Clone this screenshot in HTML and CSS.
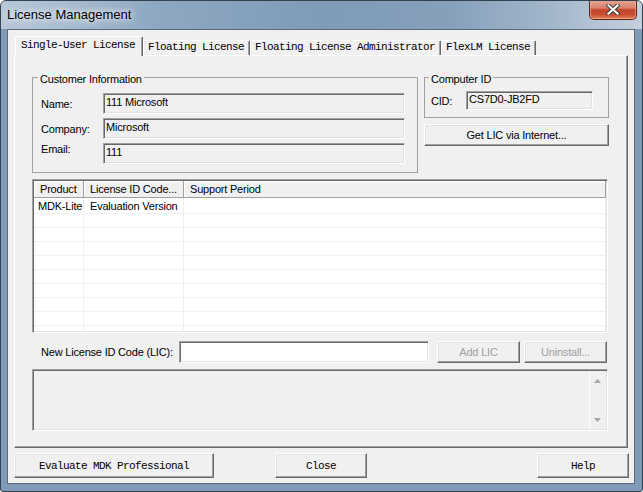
FILE: index.html
```html
<!DOCTYPE html>
<html>
<head>
<meta charset="utf-8">
<title>License Management</title>
<link rel="stylesheet" href="styles.css">
</head>
<body>
<div class="window">
  <div class="titlebar">
    <span class="title">License Management</span>
    <div class="close-btn">
      <svg width="14" height="11" viewBox="0 0 14 11">
        <path d="M2.5 1.5 L11.5 9.5 M11.5 1.5 L2.5 9.5" stroke="#3b3b3b" stroke-width="4.2" stroke-linecap="square" fill="none"/>
        <path d="M2.5 1.5 L11.5 9.5 M11.5 1.5 L2.5 9.5" stroke="#ffffff" stroke-width="2.2" stroke-linecap="square" fill="none"/>
      </svg>
    </div>
  </div>
  <div class="client">
    <div class="tabs">
      <div class="tab active">Single-User License</div>
      <div class="tab">Floating License</div>
      <div class="tab">Floating License Administrator</div>
      <div class="tab">FlexLM License</div>
    </div>
    <div class="page">
      <div class="top-row">
        <fieldset class="group customer">
          <legend>Customer Information</legend>
          <div class="form-grid">
            <label>Name:</label><div class="field">111 Microsoft</div>
            <label>Company:</label><div class="field">Microsoft</div>
            <label class="email-label">Email:</label><div class="field">111</div>
          </div>
        </fieldset>
        <div class="cid-col">
          <fieldset class="group computer">
            <legend>Computer ID</legend>
            <div class="cid-row">
              <label>CID:</label>
              <div class="field cid">CS7D0-JB2FD</div>
            </div>
          </fieldset>
          <div class="btn get-lic">Get LIC via Internet...</div>
        </div>
      </div>

      <div class="listview">
        <table class="grid">
          <colgroup><col class="c1"><col class="c2"><col class="c3"></colgroup>
          <thead>
            <tr><th>Product</th><th>License ID Code...</th><th>Support Period</th></tr>
          </thead>
          <tbody>
            <tr class="first"><td>MDK-Lite</td><td>Evaluation Version</td><td></td></tr>
            <tr><td></td><td></td><td></td></tr>
            <tr><td></td><td></td><td></td></tr>
            <tr><td></td><td></td><td></td></tr>
            <tr><td></td><td></td><td></td></tr>
            <tr><td></td><td></td><td></td></tr>
            <tr><td></td><td></td><td></td></tr>
            <tr><td></td><td></td><td></td></tr>
            <tr><td></td><td></td><td></td></tr>
            <tr><td></td><td></td><td></td></tr>
          </tbody>
        </table>
      </div>

      <div class="lic-row">
        <label>New License ID Code (LIC):</label>
        <div class="input"></div>
        <div class="btn disabled add-lic">Add LIC</div>
        <div class="btn disabled uninstall">Uninstall...</div>
      </div>

      <div class="log">
        <div class="scrollbar">
          <div class="sb-btn"><svg width="7" height="4" viewBox="0 0 7 4"><path d="M3.5 0 L7 4 H0 Z" fill="#a3a3a3"/></svg></div>
          <div class="sb-btn"><svg width="7" height="4" viewBox="0 0 7 4"><path d="M0 0 H7 L3.5 4 Z" fill="#a3a3a3"/></svg></div>
        </div>
      </div>
    </div>
    <div class="footer">
      <div class="btn mono eval">Evaluate MDK Professional</div>
      <div class="btn mono close">Close</div>
      <div class="btn mono help">Help</div>
    </div>
  </div>
</div>
</body>
</html>
```

FILE: styles.css
```css
* { box-sizing: border-box; }
html, body { margin: 0; padding: 0; }
body {
  width: 643px;
  height: 492px;
  overflow: hidden;
  background: #ffffff;
  font-family: "Liberation Sans", Arial, sans-serif;
  font-size: 11px;
  letter-spacing: -0.2px;
  color: #000;
}

/* ---------- window frame ---------- */
.window {
  width: 643px;
  height: 492px;
  border: 1px solid #34414e;
  border-radius: 6px 6px 3px 3px;
  background: #7f9bb8;
  display: flex;
  flex-direction: column;
  overflow: hidden;
}
.titlebar {
  height: 28px;
  flex: none;
  display: flex;
  align-items: flex-start;
  background: linear-gradient(to right, #b7c8d9 0%, #a9bcd0 10%, #8ea8c2 24%, #7f9bb8 50%, #86a0bb 70%, #a3b7cb 86%, #c3d0dd 100%);
}
.title {
  font-size: 13px;
  letter-spacing: 0;
  line-height: 28px;
  padding-left: 6px;
  color: #000;
  text-shadow: 0 0 6px #ffffff, 0 0 10px rgba(255,255,255,0.8);
}
.close-btn {
  margin-left: auto;
  margin-right: 5px;
  margin-top: -1px;
  width: 48px;
  height: 20px;
  border: 1px solid #5e2418;
  border-top: none;
  border-radius: 0 0 5px 5px;
  background: linear-gradient(#e8a795 0%, #d9806a 42%, #c1452a 52%, #c9502f 78%, #e0845e 100%);
  box-shadow: inset 0 0 0 1px rgba(255, 210, 190, 0.45);
  display: flex;
  align-items: center;
  justify-content: center;
}

/* ---------- client area ---------- */
.client {
  flex: none;
  margin-left: 6px;
  width: 628px;
  height: 455px;
  background: #f0f0f0;
  border: 1px solid #5b6b7c;
  padding: 6px 6px 5px 6px;
  display: flex;
  flex-direction: column;
}

/* ---------- tabs ---------- */
.tabs {
  flex: none;
  display: flex;
  align-items: flex-end;
  height: 19px;
  padding-left: 1px;
}
.tab {
  font-family: "Liberation Mono", "Courier New", monospace;
  font-size: 11px;
  letter-spacing: -0.6px;
  height: 15px;
  line-height: 13px;
  padding: 0 5px 0 4px;
  background: #f0f0f0;
  border: 1px solid;
  border-bottom: none;
  border-color: #ffffff #696969 transparent #ffffff;
  box-shadow: inset -1px 0 0 #a0a0a0;
  border-radius: 2px 2px 0 0;
  white-space: nowrap;
}
.tab.active {
  height: 20px;
  margin-bottom: -1px;
  padding: 2px 7px 0 5px;
  position: relative;
  z-index: 1;
}

.page {
  flex: none;
  width: 614px;
  height: 393px;
  background: #f0f0f0;
  border: 1px solid;
  border-color: #ffffff #696969 #696969 #ffffff;
  box-shadow: inset -1px -1px 0 #a0a0a0;
  padding: 13px 19px 0 17px;
  display: flex;
  flex-direction: column;
}

/* ---------- group boxes ---------- */
.top-row {
  display: flex;
  align-items: flex-start;
  flex: none;
}
.group {
  margin: 0;
  min-width: 0;
  border: 1px solid #a0a0a0;
}
.group legend {
  padding: 4px 2px 0 2px;
  line-height: 13px;
  margin-left: -3px;
}
.customer {
  flex: none;
  width: 386px;
  padding: 0 12px 8px 8px;
}
.form-grid {
  display: grid;
  grid-template-columns: 62px 302px;
  grid-auto-rows: 21px;
  row-gap: 4px;
  margin-top: 7px;
  align-items: center;
}
.email-label {
  align-self: start;
}

.field {
  height: 21px;
  background: #f0f0f0;
  border: 1px solid;
  border-color: #a0a0a0 #ffffff #ffffff #a0a0a0;
  box-shadow: inset 1px 1px 0 #696969, inset -1px -1px 0 #e3e3e3;
  padding: 0 2px;
  line-height: 17px;
  white-space: nowrap;
}

.cid-col {
  flex: none;
  width: 185px;
  margin-left: 6px;
  display: flex;
  flex-direction: column;
}
.computer {
  padding: 0 14px 7px 5px;
}
.computer legend { margin-left: -1px; }
.cid-row {
  display: flex;
  align-items: center;
  margin-top: 5px;
}
.cid-row label { width: 36px; padding-left: 1px; }
.field.cid {
  width: 127px;
  height: 19px;
  line-height: 15px;
}

/* ---------- buttons ---------- */
.btn {
  color: #000;
  background: #f0f0f0;
  border: 1px solid;
  border-color: #ffffff #696969 #696969 #ffffff;
  box-shadow: inset -1px -1px 0 #a0a0a0, inset 1px 1px 0 #e3e3e3;
  display: flex;
  align-items: center;
  justify-content: center;
  white-space: nowrap;
}
.btn.disabled { color: #a0a0a0; }
.get-lic {
  margin-top: 6px;
  height: 22px;
  width: 185px;
}

/* ---------- list view ---------- */
.listview {
  flex: none;
  margin-top: 6px;
  width: 576px;
  height: 154px;
  background: #ffffff;
  border: 1px solid;
  border-color: #a0a0a0 #ffffff #ffffff #a0a0a0;
  box-shadow: inset 1px 1px 0 #696969, inset -1px -1px 0 #e3e3e3;
  padding: 1px;
  overflow: hidden;
}
.grid {
  table-layout: fixed;
  border-collapse: separate;
  border-spacing: 0;
  width: 572px;
}
.grid col.c1 { width: 50px; }
.grid col.c2 { width: 100px; }
.grid th {
  height: 17px;
  padding: 0 0 0 6px;
  font-weight: normal;
  text-align: left;
  line-height: 15px;
  background: #f0f0f0;
  border-right: 1px solid #a0a0a0;
  border-bottom: 1px solid #a0a0a0;
  box-shadow: inset 1px 1px 0 #ffffff;
  white-space: nowrap;
  overflow: hidden;
}
.grid td {
  height: 14px;
  padding: 0 0 0 6px;
  line-height: 13px;
  border-right: 1px solid #f0f0f0;
  border-bottom: 1px solid #f0f0f0;
  white-space: nowrap;
  overflow: hidden;
}
.grid td:first-child { padding-left: 4px; }
.grid tr.first td {
  height: 16px;
  padding-top: 2px;
}

/* ---------- LIC row ---------- */
.lic-row {
  flex: none;
  display: flex;
  align-items: center;
  margin-top: 8px;
  padding-left: 9px;
  height: 22px;
}
.lic-row label { width: 138px; flex: none; }
.input {
  flex: none;
  width: 250px;
  height: 22px;
  background: #ffffff;
  border: 1px solid;
  border-color: #a0a0a0 #ffffff #ffffff #a0a0a0;
  box-shadow: inset 1px 1px 0 #696969, inset -1px -1px 0 #e3e3e3;
}
.add-lic { flex: none; width: 83px; height: 22px; margin-left: 8px; }
.uninstall { flex: none; width: 83px; height: 22px; margin-left: 4px; }

/* ---------- log box ---------- */
.log {
  flex: none;
  margin-top: 6px;
  width: 576px;
  height: 62px;
  background: #f0f0f0;
  border: 1px solid;
  border-color: #a0a0a0 #ffffff #ffffff #a0a0a0;
  box-shadow: inset 1px 1px 0 #696969, inset -1px -1px 0 #e3e3e3;
  padding: 2px;
  display: flex;
  justify-content: flex-end;
}
.scrollbar {
  width: 16px;
  display: flex;
  flex-direction: column;
  justify-content: space-between;
  border-left: 1px solid #ffffff;
  background: #f0f0f0;
}
.sb-btn {
  height: 17px;
  display: flex;
  align-items: center;
  justify-content: center;
}

/* ---------- footer buttons ---------- */
.footer {
  flex: none;
  display: flex;
  margin-top: 5px;
  height: 25px;
}
.mono {
  font-family: "Liberation Mono", "Courier New", monospace;
  font-size: 11px;
  letter-spacing: -0.6px;
}
.eval { width: 200px; }
.close { width: 92px; margin-left: 61px; }
.help { width: 92px; margin-left: auto; margin-right: -1px; }
```
